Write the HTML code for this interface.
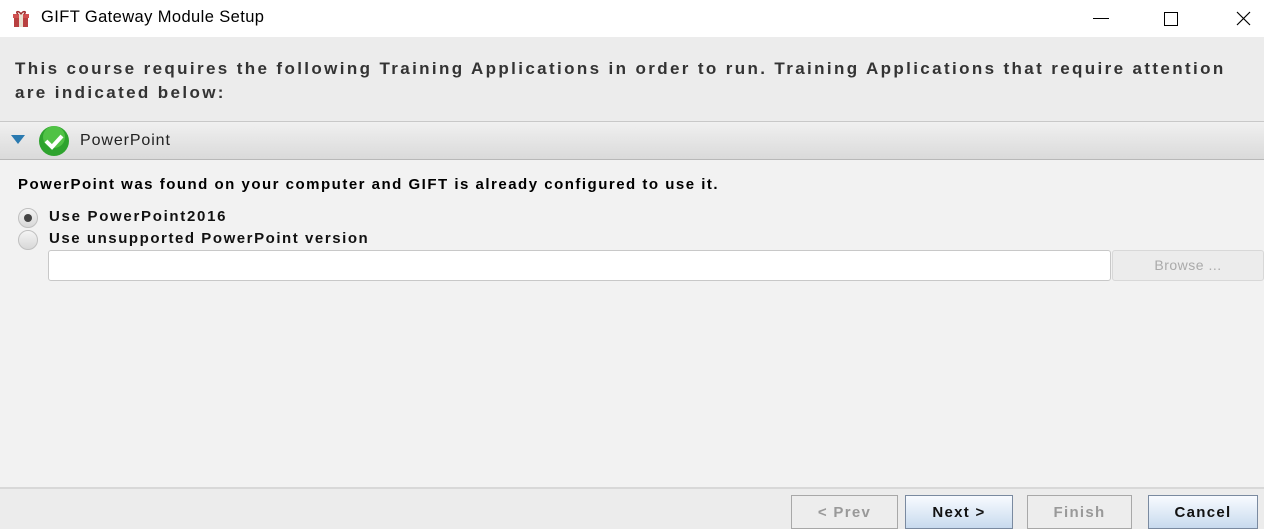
<!DOCTYPE html>
<html><head><style>
body{margin:0;width:1264px;height:529px;overflow:hidden;background:#f2f2f2;font-family:"Liberation Sans",Arial,sans-serif;position:relative}
.a{position:absolute}
</style></head><body>
<div class="a" style="left:0;top:0;width:1264px;height:37px;background:#fff"></div>
<svg class="a" style="left:12px;top:10px" width="18" height="18" viewBox="0 0 18 18"><rect x="2" y="6" width="14" height="11" fill="#b84040"/><rect x="1" y="4" width="16" height="4" fill="#d05050"/><rect x="7" y="4" width="4" height="13" fill="#e8e0d0"/><path d="M9 4 C6 0 3 2 6 4 M9 4 C12 0 15 2 12 4" stroke="#a03030" fill="none" stroke-width="1.5"/></svg>
<div class="a" style="left:41px;top:8px;font-size:16.5px;letter-spacing:0.4px;color:#000">GIFT Gateway Module Setup</div>
<div class="a" style="left:1093px;top:18px;width:16px;height:1px;background:#000"></div>
<div class="a" style="left:1164px;top:12px;width:12px;height:12px;border:1px solid #000"></div>
<svg class="a" style="left:1236px;top:11px" width="15" height="15"><path d="M1 1L14 14M14 1L1 14" stroke="#000" stroke-width="1.2"/></svg>
<div class="a" style="left:0;top:37px;width:1264px;height:84px;background:#ececec"></div>
<div class="a" style="left:15px;top:57px;font-size:17px;font-weight:bold;color:#333;letter-spacing:2.37px;line-height:24px;width:1260px;white-space:nowrap">This course requires the following Training Applications in order to run. Training Applications that require attention<br>are indicated below:</div>
<div class="a" style="left:0;top:121px;width:1264px;height:39px;background:linear-gradient(#f0f0f0,#dadada);border-top:1px solid #c8c8c8;border-bottom:1px solid #b8b8b8;box-sizing:border-box"></div>
<svg class="a" style="left:11px;top:135px" width="14" height="10"><path d="M0 0H14L7 9Z" fill="#2a7ab0"/></svg>
<svg class="a" style="left:36px;top:125px" width="36" height="32"><circle cx="18" cy="16" r="15" fill="#2ea32e"/><circle cx="18" cy="12" r="11" fill="#5fcf50" opacity=".7"/><path d="M10 16l6 6 10-11" stroke="#fff" stroke-width="4" fill="none"/></svg>
<div class="a" style="left:80px;top:132px;font-size:16px;letter-spacing:0.9px;color:#222">PowerPoint</div>
<div class="a" style="left:18px;top:176px;font-size:15px;font-weight:bold;letter-spacing:1.5px;color:#000;white-space:nowrap">PowerPoint was found on your computer and GIFT is already configured to use it.</div>
<div class="a" style="left:18px;top:208px;width:20px;height:20px;border-radius:50%;background:linear-gradient(#f4f4f4,#d8d8d8);border:1px solid #c0c0c0;box-sizing:border-box"></div>
<div class="a" style="left:24px;top:214px;width:8px;height:8px;border-radius:50%;background:#444"></div>
<div class="a" style="left:49px;top:208px;font-size:15px;font-weight:bold;letter-spacing:1.7px;color:#111;white-space:nowrap">Use PowerPoint2016</div>
<div class="a" style="left:18px;top:230px;width:20px;height:20px;border-radius:50%;background:linear-gradient(#f4f4f4,#d8d8d8);border:1px solid #c0c0c0;box-sizing:border-box"></div>
<div class="a" style="left:49px;top:230px;font-size:15px;font-weight:bold;letter-spacing:1.55px;color:#111;white-space:nowrap">Use unsupported PowerPoint version</div>
<div class="a" style="left:48px;top:250px;width:1063px;height:31px;background:#fff;border:1px solid #c8c8c8;border-radius:3px;box-sizing:border-box"></div>
<div class="a" style="left:1112px;top:250px;width:152px;height:31px;background:#ececec;border:1px solid #d8d8d8;border-radius:3px;box-sizing:border-box;text-align:center;line-height:29px;font-size:14px;letter-spacing:0.5px;color:#aaa">Browse ...</div>
<div class="a" style="left:0;top:487px;width:1264px;height:42px;background:#ececec;border-top:2px solid #d8d8d8;box-sizing:border-box"></div>
<div class="a" style="left:791px;top:495px;width:107px;height:34px;border:1px solid #a8a8a8;box-sizing:border-box;background:#ededed;text-align:center;line-height:33px;font-size:15px;font-weight:bold;letter-spacing:1.3px;color:#999">&lt; Prev</div>
<div class="a" style="left:905px;top:495px;width:108px;height:34px;border:1px solid #7a8aa0;box-sizing:border-box;background:linear-gradient(#f8fbff,#c8daee);text-align:center;line-height:33px;font-size:15px;font-weight:bold;letter-spacing:1.3px;color:#111">Next &gt;</div>
<div class="a" style="left:1027px;top:495px;width:105px;height:34px;border:1px solid #a8a8a8;box-sizing:border-box;background:#ededed;text-align:center;line-height:33px;font-size:15px;font-weight:bold;letter-spacing:1.3px;color:#999">Finish</div>
<div class="a" style="left:1148px;top:495px;width:110px;height:34px;border:1px solid #7a8aa0;box-sizing:border-box;background:linear-gradient(#f8fbff,#c8daee);text-align:center;line-height:33px;font-size:15px;font-weight:bold;letter-spacing:1.3px;color:#111">Cancel</div>
</body></html>
